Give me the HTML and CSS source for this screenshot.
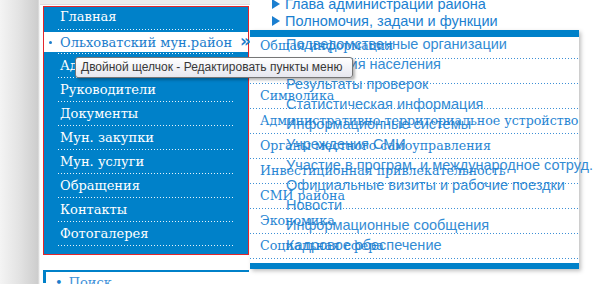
FILE: index.html
```html
<!DOCTYPE html>
<html lang="ru">
  <head>
    <meta charset="UTF-8" />
    <meta name="viewport" content="width=device-width, initial-scale=1.0" />
    <title>Ольховатский муниципальный район</title>
    <link rel="stylesheet" href="styles.css">
  </head>
  <body>
    <div class="page">
      <aside class="sidebar">
        <div class="topbar"></div>
        <nav class="menu">
          <ul class="menu-list">
            <li class="menu-item first"><a href="#">Главная</a></li>
            <li class="menu-item active"><a href="#">Ольховатский мун.район<span class="arrow">&raquo;</span></a></li>
            <li class="menu-item"><a href="#">Администрация</a></li>
            <li class="menu-item"><a href="#">Руководители</a></li>
            <li class="menu-item"><a href="#">Документы</a></li>
            <li class="menu-item"><a href="#">Мун. закупки</a></li>
            <li class="menu-item"><a href="#">Мун. услуги</a></li>
            <li class="menu-item"><a href="#">Обращения</a></li>
            <li class="menu-item"><a href="#">Контакты</a></li>
            <li class="menu-item"><a href="#">Фотогалерея</a></li>
          </ul>
        </nav>
        <div class="search-box">
          <ul>
            <li><a href="#">Поиск</a></li>
          </ul>
        </div>
      </aside>

      <main class="content">
        <ul class="top-list">
          <li><a href="#">Глава администрации района</a></li>
          <li><a href="#">Полномочия, задачи и функции</a></li>
        </ul>

        <div class="dropdown">
          <ul class="drop-list">
            <li><a href="#">Общая информация</a></li>
            <li><a href="#">История</a></li>
            <li><a href="#">Символика</a></li>
            <li><a href="#">Административно-территориальное устройство</a></li>
            <li><a href="#">Органы местного самоуправления</a></li>
            <li><a href="#">Инвестиционная привлекательность</a></li>
            <li><a href="#">СМИ района</a></li>
            <li><a href="#">Экономика</a></li>
            <li><a href="#">Социальная сфера</a></li>
          </ul>
          <!-- второй уровень, ещё не погасший после наведения -->
          <ul class="ghost-list">
            <li><a href="#">Подведомственные организации</a></li>
            <li><a href="#">Обращения населения</a></li>
            <li><a href="#">Результаты проверок</a></li>
            <li><a href="#">Статистическая информация</a></li>
            <li><a href="#">Информационные системы</a></li>
            <li><a href="#">Учреждения СМИ</a></li>
            <li><a href="#">Участие в програм. и международное сотруд.</a></li>
            <li><a href="#">Официальные визиты и рабочие поездки</a></li>
            <li><a href="#">Новости</a></li>
            <li><a href="#">Информационные сообщения</a></li>
            <li><a href="#">Кадровое обеспечение</a></li>
          </ul>
        </div>
      </main>
    </div>

    <div class="tooltip">Двойной щелчок - Редактировать пункты меню</div>
  </body>
</html>
```

FILE: styles.css
```css
* {
  box-sizing: border-box;
}

body {
  margin: 0;
  height: 284px;
  overflow: hidden;
  background: linear-gradient(to right, #f4f4f4 0, #e2e2e2 20px, #cdcdcd 38px, #fff 40px);
}

a {
  color: inherit;
  text-decoration: none;
}

ul {
  list-style: none;
  margin: 0;
  padding: 0;
}

.page {
  display: flex;
  height: 284px;
  overflow: hidden;
}

/* left column */

.sidebar {
  width: 210px;
  margin-left: 40px;
  padding-left: 3px;
  background-color: #fff;
}

.topbar {
  height: 5px;
  margin-left: -3px;
  background-color: #ececec;
  border-bottom: 1px solid #dcdcdc;
}

.menu {
  width: 206px;
  margin-top: 1px;
  padding-bottom: 8px;
  background-color: #0081c9;
  border: 1px solid #e3262b;
}

.menu-item {
  font-family: "DejaVu Serif", serif;
  font-size: 13px;
  color: #fff;
  white-space: nowrap;
}

.menu-item a {
  display: block;
  height: 23px;
  line-height: 23px;
  padding-left: 16px;
}

.menu-item.first a {
  height: 22px;
  line-height: 19px;
}

.menu-item::after {
  content: "";
  display: block;
  height: 1px;
  margin: 0 14px;
  background: linear-gradient(to right, #e6f2fa 1px, transparent 1px) repeat-x;
  background-size: 3px 1px;
}

.menu-item.active a {
  position: relative;
  height: 20px;
  line-height: 20px;
  margin: 2px 0 1px;
  background-color: #fff;
  color: #1b7dcc;
}

.menu-item.active a::before {
  content: "";
  position: absolute;
  left: 5px;
  top: 9px;
  width: 3px;
  height: 3px;
  border-radius: 50%;
  background-color: #1b7dcc;
}

.arrow {
  margin-left: 8px;
  font-family: "DejaVu Sans", sans-serif;
  font-weight: bold;
  font-size: 17px;
  line-height: 18px;
}

.search-box {
  width: 206px;
  height: 13px;
  margin-top: 15px;
  border-top: 2px solid #0081c9;
  border-left: 3px solid #0081c9;
  padding: 3px 0 0 9px;
  font-family: "DejaVu Serif", serif;
  font-size: 13px;
  line-height: 16px;
  color: #3d91d8;
}

.search-box li::before {
  content: "•";
  margin-right: 6px;
  color: #1b7dcc;
}

/* right column */

.content {
  flex: 1;
  position: relative;
}

.top-list {
  margin-top: -5px;
  padding-left: 22px;
  font-family: "Liberation Sans", Arial, sans-serif;
  font-size: 14.5px;
  color: #1b7fd0;
}

.top-list li {
  display: flex;
  align-items: center;
  gap: 5px;
  height: 17px;
}

.top-list li::before {
  content: "";
  border-left: 8px solid #1b7fd0;
  border-top: 5px solid transparent;
  border-bottom: 5px solid transparent;
}

.dropdown {
  position: absolute;
  left: 0;
  top: 30px;
  width: 329px;
  height: 239px;
  background-color: #fff;
  border-top: 7px solid #0081c9;
  border-bottom: 6px solid #0081c9;
  box-shadow: 2px 2px 4px rgba(0, 0, 0, 0.25);
}

.drop-list {
  margin-top: -3px;
  font-family: "DejaVu Serif", serif;
  font-size: 12.6px;
  color: #2785d3;
  white-space: nowrap;
}

.drop-list li a {
  display: block;
  height: 24px;
  line-height: 24px;
  padding-left: 10px;
}

.drop-list li::after {
  content: "";
  display: block;
  height: 1px;
  background: linear-gradient(to right, #3c8fd6 1px, transparent 1px) repeat-x;
  background-size: 3px 1px;
}

.ghost-list {
  position: absolute;
  left: 36px;
  top: -3px;
  font-family: "Liberation Sans", Arial, sans-serif;
  font-size: 14.5px;
  color: #1a7fd0;
  white-space: nowrap;
  opacity: 0.9;
}

.ghost-list li {
  height: 20.1px;
  line-height: 20px;
}

.tooltip {
  position: absolute;
  left: 75px;
  top: 57px;
  width: 278px;
  height: 21px;
  padding-left: 5px;
  line-height: 19px;
  font-family: "Liberation Sans", Arial, sans-serif;
  font-size: 12px;
  color: #383838;
  background: linear-gradient(#ffffff, #e6e7ef);
  border: 1px solid #767676;
  border-radius: 3px;
  box-shadow: 2px 2px 3px rgba(0, 0, 0, 0.3);
}
```
